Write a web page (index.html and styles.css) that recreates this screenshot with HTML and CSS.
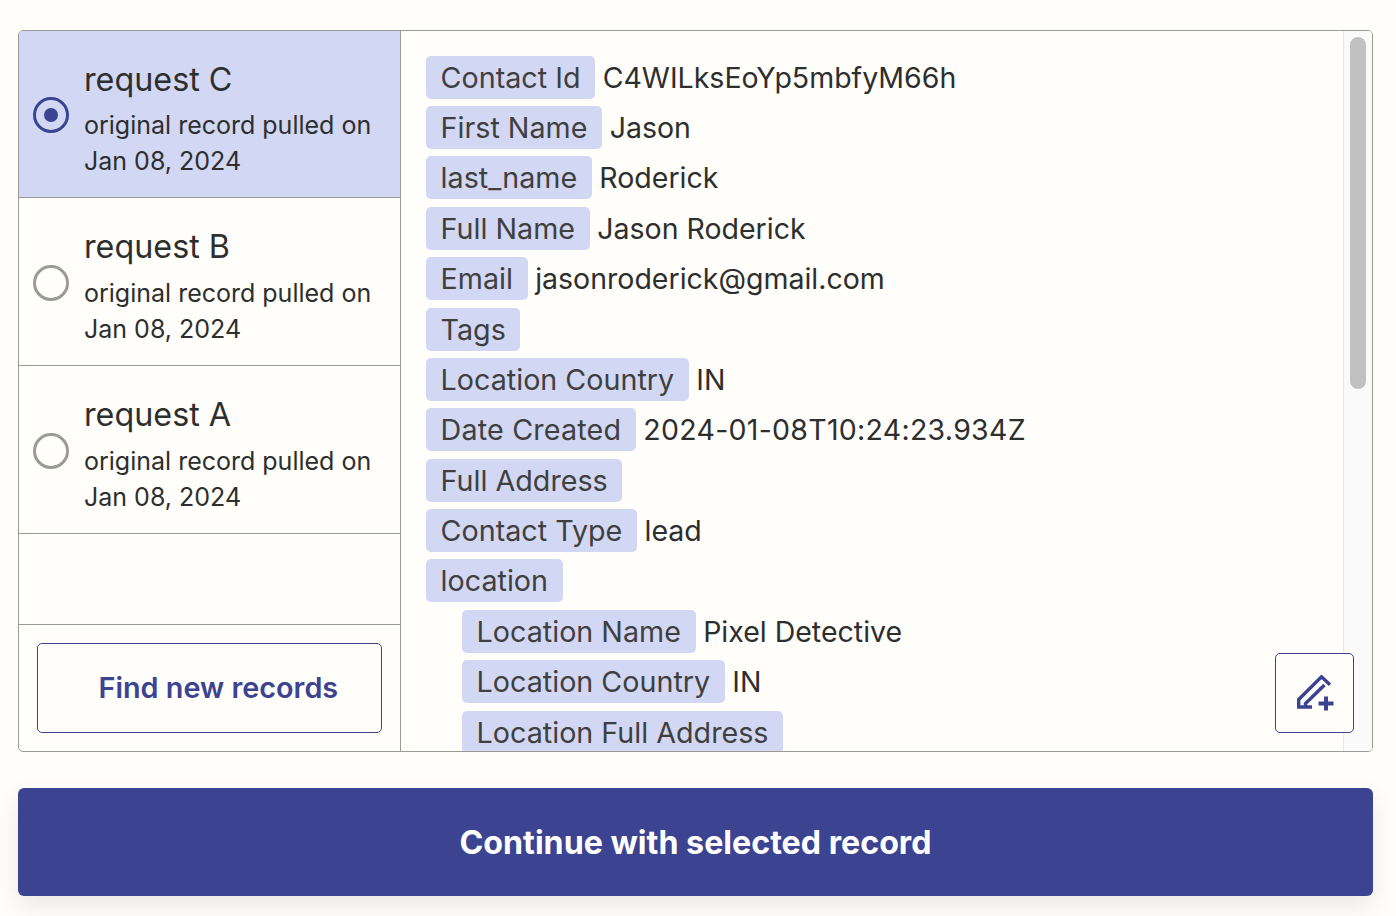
FILE: index.html
```html
<!DOCTYPE html>
<html lang="en">
<head>
<meta charset="utf-8">
<title>Select record</title>
<link rel="stylesheet" href="styles.css">
</head>
<body>
<main class="page">
  <section class="panel">
    <aside class="sidebar">
      <div class="record selected">
        <span class="radio checked"></span>
        <div class="record-text">
          <div class="record-title">request C</div>
          <div class="record-sub">original record pulled on<br>Jan 08, 2024</div>
        </div>
      </div>
      <div class="record">
        <span class="radio"></span>
        <div class="record-text">
          <div class="record-title">request B</div>
          <div class="record-sub">original record pulled on<br>Jan 08, 2024</div>
        </div>
      </div>
      <div class="record">
        <span class="radio"></span>
        <div class="record-text">
          <div class="record-title">request A</div>
          <div class="record-sub">original record pulled on<br>Jan 08, 2024</div>
        </div>
      </div>
      <div class="spacer"></div>
      <div class="find-wrap"><button class="find-btn">Find new records</button></div>
    </aside>
    <div class="detail">
      <div class="fields">
        <div class="field"><span class="tag">Contact Id</span><span class="val">C4WILksEoYp5mbfyM66h</span></div>
        <div class="field"><span class="tag">First Name</span><span class="val">Jason</span></div>
        <div class="field"><span class="tag">last_name</span><span class="val">Roderick</span></div>
        <div class="field"><span class="tag">Full Name</span><span class="val">Jason Roderick</span></div>
        <div class="field"><span class="tag">Email</span><span class="val">jasonroderick@gmail.com</span></div>
        <div class="field"><span class="tag">Tags</span></div>
        <div class="field"><span class="tag">Location Country</span><span class="val">IN</span></div>
        <div class="field"><span class="tag tag-wide">Date Created</span><span class="val val-wide">2024-01-08T10:24:23.934Z</span></div>
        <div class="field"><span class="tag">Full Address</span></div>
        <div class="field"><span class="tag">Contact Type</span><span class="val">lead</span></div>
        <div class="field"><span class="tag">location</span></div>
        <div class="field nested"><span class="tag">Location Name</span><span class="val">Pixel Detective</span></div>
        <div class="field nested"><span class="tag">Location Country</span><span class="val">IN</span></div>
        <div class="field nested"><span class="tag">Location Full Address</span></div>
      </div>
      <div class="scrollbar"><div class="thumb"></div></div>
      <button class="edit-btn" aria-label="Add field">
        <svg width="38" height="36" viewBox="0 0 38 36" fill="none" stroke="#3c4391" stroke-width="3.4">
          <path d="M34 9.800 25.500 1.800 2.700 24.500V32H16"/>
          <path d="M9.500 32V28.500L28.500 10"/>
          <path d="M30 21.500V35.500M22.500 28.500H37.500" stroke-width="4"/>
        </svg>
      </button>
    </div>
  </section>
  <button class="continue">Continue with selected record</button>
</main>
</body>
</html>
```
FILE: styles.css
```css
* { box-sizing: border-box; }
html, body { margin: 0; height: 100%; }
body {
  background: #fffefb;
  font-family: Inter, "Liberation Sans", sans-serif;
  color: #2d2e2e;
}
.page {
  height: 916px;
  padding: 30px 23px 0 18px;
  display: flex;
  flex-direction: column;
}
.panel {
  height: 722px;
  display: flex;
  border: 1px solid #9b9a95;
  border-radius: 5px;
  overflow: hidden;
}
.sidebar {
  width: 382px;
  flex: none;
  display: flex;
  flex-direction: column;
  border-right: 1px solid #9b9a95;
}
.record {
  height: 168px;
  flex: none;
  display: flex;
  align-items: center;
  padding-left: 14px;
  border-bottom: 1px solid #9b9a95;
}
.record.selected { height: 167px; background: #d2d7f4; }
.radio {
  width: 36px;
  height: 36px;
  flex: none;
  margin-top: 2px;
  border: 3px solid #9b9a95;
  border-radius: 50%;
  display: flex;
  align-items: center;
  justify-content: center;
}
.radio.checked { border-color: #3c4391; }
.radio.checked::after {
  content: "";
  width: 14px;
  height: 14px;
  border-radius: 50%;
  background: #3c4391;
}
.record-text { margin: 8px 0 0 15px; }
.record-title { font-size: 32.3px; line-height: 44px; margin-bottom: 6px; }
.record-sub { font-size: 25px; line-height: 36px; }
.selected .record-text { margin-top: 9px; }
.selected .record-title { margin-bottom: 5px; }
.spacer { flex: 1; border-bottom: 1px solid #9b9a95; }
.find-wrap { height: 126px; flex: none; padding: 18px 18px 0; }
.find-btn {
  width: 345px;
  height: 90px;
  border: 1px solid #3c4391;
  border-radius: 5px;
  background: transparent;
  color: #3c4391;
  font: 600 28.8px Inter, "Liberation Sans", sans-serif;
  text-align: left;
  padding: 0 0 2px 60.5px;
}
.detail {
  flex: 1;
  position: relative;
  display: flex;
  min-width: 0;
}
.fields {
  flex: 1;
  padding: 24.65px 0 0 25px;
  overflow: hidden;
}
.field {
  display: flex;
  align-items: flex-start;
  height: 50.38px;
  font-size: 28.7px;
}
.nested { padding-left: 36px; }
.tag {
  height: 43px;
  line-height: 43px;
  padding: 0 14.6px;
  border-radius: 5px;
  background: #d2d7f4;
  color: #3f3f3f;
  white-space: nowrap;
}
.tag-wide { letter-spacing: 0.17px; }
.val { margin-left: 7.6px; line-height: 43px; white-space: nowrap; font-size: 28.5px; }
.val-wide { letter-spacing: 0.28px; }
.scrollbar {
  width: 29px;
  flex: none;
  background: #fafafa;
  border-left: 1px solid #e8e8e8;
  padding: 6px 6px 0;
}
.thumb {
  height: 352px;
  border-radius: 8px;
  background: #c1c1c1;
}
.edit-btn {
  position: absolute;
  right: 18px;
  bottom: 18px;
  width: 79px;
  height: 80px;
  border: 1px solid #3c4391;
  border-radius: 5px;
  background: #fffefb;
  padding: 0;
  display: flex;
  align-items: center;
  justify-content: center;
}
.continue {
  margin-top: 36px;
  height: 108px;
  width: 1355px;
  flex: none;
  border: 0;
  border-radius: 6px;
  background: #3c4391;
  color: #fff;
  font: 700 32.2px/1 Inter, "Liberation Sans", sans-serif;
  padding: 2px 0 0;
  box-shadow: 0 10px 24px rgba(0,0,0,0.09);
}
```
